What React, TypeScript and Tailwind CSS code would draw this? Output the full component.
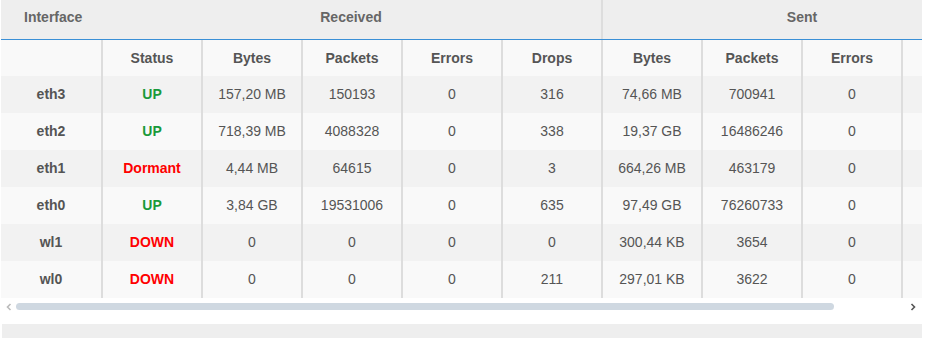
const rows = [
  { name: "eth3", status: "UP", rx: ["157,20 MB", "150193", "0", "316"], tx: ["74,66 MB", "700941", "0"] },
  { name: "eth2", status: "UP", rx: ["718,39 MB", "4088328", "0", "338"], tx: ["19,37 GB", "16486246", "0"] },
  { name: "eth1", status: "Dormant", rx: ["4,44 MB", "64615", "0", "3"], tx: ["664,26 MB", "463179", "0"] },
  { name: "eth0", status: "UP", rx: ["3,84 GB", "19531006", "0", "635"], tx: ["97,49 GB", "76260733", "0"] },
  { name: "wl1", status: "DOWN", rx: ["0", "0", "0", "0"], tx: ["300,44 KB", "3654", "0"] },
  { name: "wl0", status: "DOWN", rx: ["0", "0", "0", "211"], tx: ["297,01 KB", "3622", "0"] },
];

// last Sent column sits past the scroll edge, so it is left blank
const subHeads = ["Status", "Bytes", "Packets", "Errors", "Drops", "Bytes", "Packets", "Errors"];

function Cell({ children, className = "" }: { children?: React.ReactNode; className?: string }) {
  return (
    <div className={`w-[100px] shrink-0 border-l-2 border-[#dddddd] flex items-center justify-center ${className}`}>
      {children}
    </div>
  );
}

export default function App() {
  return (
    <div className="w-[935px] h-[338px] bg-white overflow-hidden text-[14px] text-[#555555] [font-family:'Liberation_Sans',Arial,sans-serif]">
      <div className="ml-[1px] w-[921px] overflow-hidden">
        <div className="w-[1000px]">
          {/* group header */}
          <div className="flex h-[40px] bg-[#eeeeee] border-b border-[#3a8fd6] font-bold text-[#666666]">
            <div className="w-[100px] shrink-0 pl-[23px] pt-[7px]">Interface</div>
            <div className="w-[500px] shrink-0 text-center pt-[7px]">Received</div>
            <div className="w-[400px] shrink-0 text-center pt-[7px] border-l-2 border-[#dddddd]">Sent</div>
          </div>

          {/* column header */}
          <div className="flex h-[36px] bg-[#f9f9f9] font-bold text-[#555555]">
            <div className="w-[100px] shrink-0" />
            {subHeads.map((h, i) => (
              <Cell key={i}>{h}</Cell>
            ))}
            <Cell />
          </div>

          {rows.map((r, i) => (
            <div key={r.name} className={`flex h-[37px] ${i % 2 === 0 ? "bg-[#f2f2f2]" : "bg-[#f9f9f9]"}`}>
              <div className="w-[100px] shrink-0 flex items-center justify-center font-bold">{r.name}</div>
              <Cell className={`font-bold ${r.status === "UP" ? "text-[#199a3a]" : "text-[#ff0000]"}`}>{r.status}</Cell>
              {r.rx.map((v, j) => (
                <Cell key={"rx" + j}>{v}</Cell>
              ))}
              {r.tx.map((v, j) => (
                <Cell key={"tx" + j}>{v}</Cell>
              ))}
              <Cell />
            </div>
          ))}
        </div>
      </div>

      {/* scrollbar */}
      <div className="flex items-center h-[17px] w-[922px] pl-[5px] pr-[5px]">
        <svg width="8" height="8" viewBox="0 0 8 8" className="shrink-0">
          <path d="M5.5 1 L2.5 4 L5.5 7" fill="none" stroke="#bbbbbb" strokeWidth="1.6" />
        </svg>
        <div className="flex-1 mx-[3px] h-[7px]">
          <div className="w-[818px] h-[7px] rounded-full bg-[#cfd8e1]" />
        </div>
        <svg width="8" height="8" viewBox="0 0 8 8" className="shrink-0">
          <path d="M2.5 1 L5.5 4 L2.5 7" fill="none" stroke="#555555" strokeWidth="1.6" />
        </svg>
      </div>

      <div className="mt-[9px] ml-[2px] w-[920px] h-[14px] bg-[#eeeeee]" />
    </div>
  );
}
